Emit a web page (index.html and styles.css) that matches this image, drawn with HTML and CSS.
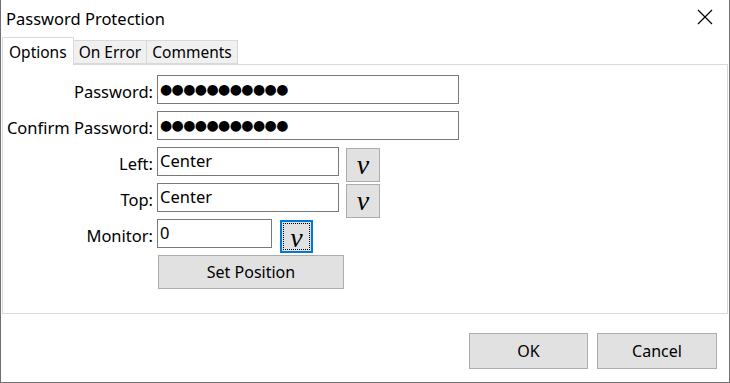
FILE: index.html
```html
<!DOCTYPE html>
<html lang="en">
<head>
    <meta charset="UTF-8">
    <title>Password Protection</title>
    <link rel="stylesheet" href="styles.css">
</head>
<body>
    <div class="window">
        <div class="titlebar">
            <span class="title">Password Protection</span>
            <svg class="close" width="16" height="16" viewBox="0 0 16 16">
                <path d="M1 1 L15 15 M15 1 L1 15" stroke="#000" stroke-width="1.2" fill="none"/>
            </svg>
        </div>

        <div class="tabs">
            <div class="tab active">Options</div>
            <div class="tab">On Error</div>
            <div class="tab">Comments</div>
        </div>

        <div class="panel">
            <div class="form">
                <label>Password:</label>
                <div class="field wide dots">●●●●●●●●●●●</div>

                <label>Confirm Password:</label>
                <div class="field wide dots">●●●●●●●●●●●</div>

                <label>Left:</label>
                <div class="line">
                    <div class="field mid">Center</div>
                    <button class="drop">v</button>
                </div>

                <label>Top:</label>
                <div class="line">
                    <div class="field mid">Center</div>
                    <button class="drop">v</button>
                </div>

                <label>Monitor:</label>
                <div class="line">
                    <div class="field small">0</div>
                    <button class="drop focus"><span>v</span></button>
                </div>

                <span></span>
                <div><button class="btn setpos">Set Position</button></div>
            </div>
        </div>

        <div class="footer">
            <button class="btn ok">OK</button>
            <button class="btn">Cancel</button>
        </div>
    </div>
</body>
</html>
```

FILE: styles.css
```css
body {
    margin: 0;
    font-family: "Noto Sans", sans-serif;
    font-size: 16.5px;
    color: #000;
    background: #fff;
}
.window {
    width: 730px;
    height: 383px;
    box-sizing: border-box;
    border: 1px solid #707070;
    border-top: none;
    background: #fff;
}
.titlebar {
    height: 37px;
    display: flex;
    align-items: center;
    justify-content: space-between;
    padding: 0 16px 0 5px;
}
.title {
    font-size: 16.5px;
}
.close {
    margin-top: -3px;
}
.tabs {
    display: flex;
    align-items: flex-end;
    margin-left: 1px;
    height: 27px;
    position: relative;
    z-index: 1;
    font-size: 15.5px;
}
.tab {
    height: 24px;
    line-height: 23px;
    padding: 0 5px;
    background: #f0f0f0;
    border: 1px solid #d9d9d9;
    border-left: none;
    box-sizing: border-box;
}
.tab.active {
    height: 28px;
    line-height: 28px;
    background: #fff;
    border-left: 1px solid #d9d9d9;
    border-bottom: none;
    margin-bottom: -1px;
    padding: 0 6px;
}
.panel {
    margin: 0 1px;
    height: 250px;
    box-sizing: border-box;
    border: 1px solid #d9d9d9;
    padding-top: 10px;
}
.form {
    display: grid;
    grid-template-columns: 150px auto;
    grid-auto-rows: 36px;
    column-gap: 4px;
}
.form label {
    text-align: right;
    line-height: 29px;
    padding-top: 2px;
    white-space: nowrap;
}
.field {
    height: 29px;
    box-sizing: border-box;
    border: 1px solid #7a7a7a;
    padding: 0 2px;
    line-height: 25px;
}
.wide { width: 302px; }
.mid { width: 182px; }
.small { width: 115px; }
.dots {
    font-family: "DejaVu Sans", sans-serif;
    font-size: 14px;
    letter-spacing: -0.6px;
    line-height: 26px;
}
.line {
    display: flex;
    align-items: flex-start;
}
.drop {
    margin: 1px 0 0 7px;
    width: 34px;
    height: 34px;
    padding: 0;
    background: #e1e1e1;
    border: 1px solid #adadad;
    font-family: "Liberation Serif", serif;
    font-style: italic;
    font-size: 28px;
    line-height: 32px;
    color: #000;
}
.drop.focus {
    width: 33px;
    height: 33px;
    margin-left: 8px;
    border: 2px solid #0078d7;
    padding: 1px;
}
.drop.focus span {
    display: block;
    height: 100%;
    border: 1px dotted #000;
    box-sizing: border-box;
    line-height: 27px;
}
.btn {
    background: #e1e1e1;
    border: 1px solid #adadad;
    font-family: "Noto Sans", sans-serif;
    font-size: 16px;
    color: #000;
    padding: 0;
}
.setpos {
    margin-left: 1px;
    width: 186px;
    height: 34px;
}
.footer {
    display: flex;
    justify-content: flex-end;
    gap: 9px;
    padding: 19px 12px 0 0;
}
.footer .btn {
    width: 120px;
    height: 36px;
}
.footer .ok {
    width: 119px;
}
```
